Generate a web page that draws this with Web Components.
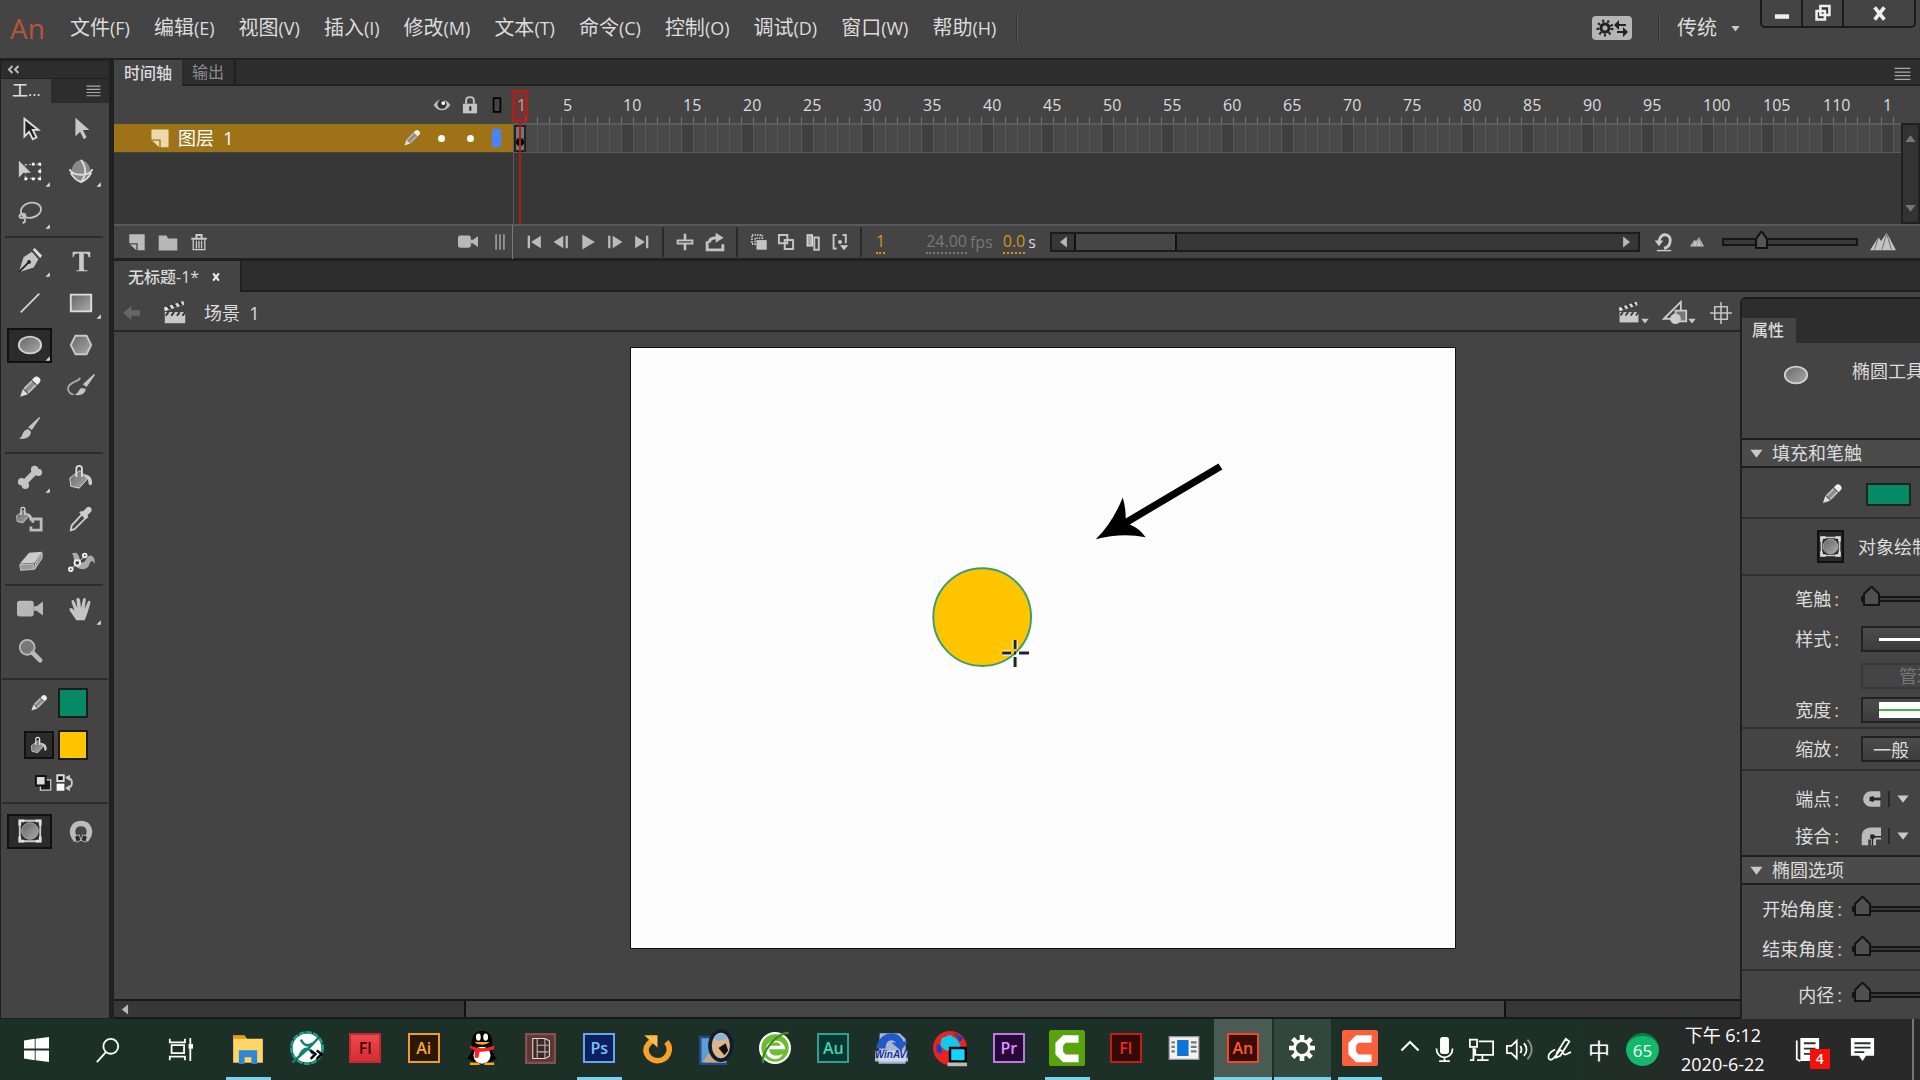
<!DOCTYPE html>
<html lang="zh-CN">
<head>
<meta charset="utf-8">
<title>An</title>
<style>
  :root {
    --bg: #444444;
    --bg-dark: #2d2d2d;
    --bg-body: #373737;
    --line: #202020;
    --text: #dcdcdc;
    --icon: #c4c4c4;
    --orange: #d99316;
    --green: #068a66;
    --yellow: #ffc500;
  }
  body {
    margin: 0;
    height: 100vh;
    display: flex;
    flex-direction: column;
    overflow: hidden;
    background: var(--line);
    color: var(--text);
    font: 18px/24px "Open Sans", "Noto Sans CJK SC", sans-serif;
  }
  main {
    flex: 1;
    min-height: 0;
    display: flex;
    gap: 4px;
  }
  .work {
    flex: 1;
    min-width: 0;
    display: flex;
    flex-direction: column;
    gap: 3px;
  }
  document-view { flex: 1; }
</style>
</head>
<body>
<menu-bar></menu-bar>
<main>
  <tools-panel></tools-panel>
  <div class="work">
    <timeline-panel></timeline-panel>
    <document-view><properties-panel></properties-panel></document-view>
  </div>
</main>
<task-bar></task-bar>

<script>
const BASE = `
  :host, * { box-sizing: border-box; }
  button, select, input {
    font: inherit;
    color: inherit;
    background: none;
    border: 0;
    padding: 0;
    margin: 0;
    border-radius: 0;
    appearance: none;
  }
  button { display: flex; align-items: center; justify-content: center; }
`;

const PENCIL = '<g transform="rotate(45 14 14)"><path d="M10 4a4 4 0 0 1 8 0v3h-8z" fill="#eee"/><path d="M10 8h8v12h-8z" fill="#8c8c8c"/><path d="M10 8h2v12h-2zM16 8h2v12h-2z" fill="#bbb"/><path d="M10 21h8l-4 8z" fill="#ddd"/></g>';
const BUCKET = '<path d="M2 15 13 7l8 9-9 10-9-2z" fill="url(#g)" stroke="#ddd"/><path d="M9 14V5a3 3 0 0 1 6 0v9" fill="none" stroke="#ddd" stroke-width="2"/><path d="M17 11c6 0 9 4 9 9 0 4-4 4-4 0 0-3-1-5-4-6z" fill="#ccc"/>';
const CLAP = '<path d="M3 13h22v12H3z" fill="#c9c9c9"/><path d="m2 8 21-7 1 4L3 12z" fill="#ddd"/><path d="m6 6 3 4M12 4l3 4M18 2l3 4" stroke="#333" stroke-width="3"/><path d="m7 13-3 4M13 13l-3 4M19 13l-3 4M25 13l-3 4" stroke="#333" stroke-width="2"/>';
const OBJ = '<path d="M3 3h22v22H3z" fill="#2a2a2a" stroke="#ccc" stroke-width="2"/><circle cx="14" cy="14" r="9" fill="url(#g)" stroke="#aaa"/><path d="M3 8V3h5M20 3h5v5M25 20v5h-5M8 25H3v-5" fill="none" stroke="#ddd" stroke-width="3"/>';

// every icon is drawn on a 28 x 28 grid
const ICONS = {
  select: '<path d="M8 3v19l5-5 4 8 4-2-4-8h6z" fill="#222" stroke="#ddd" stroke-width="2"/>',
  subselect: '<path d="M8 2v20l5-5 4 8 3-2-4-8h7z" fill="#c8c8c8"/>',
  transform: '<path d="M9 7h16v15H9z" fill="none" stroke="#ccc" stroke-dasharray="2 2"/><path d="M16 5h3v3h-3zM23 5h3v3h-3zM23 13h3v3h-3zM23 21h3v3h-3zM16 21h3v3h-3zM8 21h3v3H8z" fill="#fff"/><path d="M2 3v18l5-5h8z" fill="#ccc"/>',
  rotate3d: '<path d="M14 2C7 4 4 9 4 14c1 6 6 10 10 12 4-2 9-6 10-12 0-5-3-10-10-12z" fill="#888"/><path d="M2 12c1 8 23 8 24 0M14 2c6 8 6 16 0 24M3 16c2 4 6 8 11 10 5-2 9-6 11-10" fill="none" stroke="#ddd" stroke-width="2"/>',
  lasso: '<ellipse cx="15" cy="11" rx="11" ry="8" transform="rotate(-12 15 11)" fill="none" stroke="#c4c4c4" stroke-width="2"/><path d="M6 15c-5 1-4 5 0 4s4-5 0-4zm1 4c3 2 2 5-1 6" fill="none" stroke="#c4c4c4" stroke-width="2"/>',
  pen: '<path d="m2 26 5-16 9-6 7 8-5 9z" fill="#c4c4c4"/><path d="m2 26 11-11" stroke="#222" stroke-width="2"/><circle cx="13" cy="15" r="2" fill="#222"/><path d="m17 2 2-2 8 8-2 3z" fill="#ddd"/>',
  type: '<path d="M5 4h19v6h-2c0-3-1-4-5-4v16c0 2 1 2 4 2v1H9v-1c3 0 3 0 3-2V6c-5 0-5 1-6 4H5z" fill="#c9c9c9"/>',
  line: '<path d="M4 24 24 4" stroke="#d0d0d0" stroke-width="2"/>',
  rect: '<path d="M3 5h22v18H3z" fill="url(#g)" stroke="#ddd" stroke-width="2"/>',
  ellipse: '<ellipse cx="14" cy="14" rx="12" ry="9" fill="url(#g)" stroke="#d0d0d0" stroke-width="2"/>',
  hex: '<path d="M8 4h12l5 10-5 10H8L3 14z" fill="url(#g)" stroke="#c8c8c8" stroke-width="2"/>',
  pencil: PENCIL,
  brush: '<path d="m25 2-9 13-4-3L24 1z" fill="#c4c4c4"/><path d="M15 17c0 6-7 9-13 7 4-1 3-4 6-8l4-2z" fill="#c4c4c4"/>',
  paint: '<path d="m29 1-9 13-4-3L28 0z" fill="#c4c4c4"/><path d="M19 16c0 6-7 8-12 6 4-1 4-4 7-7z" fill="#c4c4c4"/><path d="M13 4C12 9 0 8 0 16c0 4 4 6 6 6" fill="none" stroke="#aaa" stroke-width="2"/>',
  bone: '<path d="m6 22 16-16" stroke="#c4c4c4" stroke-width="6"/><g fill="#c4c4c4"><circle cx="19" cy="6" r="4"/><circle cx="23" cy="9" r="4"/><circle cx="5" cy="19" r="4"/><circle cx="9" cy="23" r="4"/></g>',
  bucket: BUCKET,
  inkbottle: '<g transform="translate(-2 0) scale(.7)">' + BUCKET + '</g><path d="M17 18v-4h9v12H15v-4" fill="none" stroke="#bbb" stroke-width="3"/>',
  dropper: '<path d="m15 9 4 4L7 25l-4 1 1-5z" fill="none" stroke="#ccc" stroke-width="2"/><path d="m12 7 3-2 1 1 4-4c3-3 7 1 5 4l-4 4 1 2-3 2z" fill="#ccc"/>',
  eraser: '<path d="m13 5 14-1-8 12-16 1z" fill="#ccc"/><path d="m3 18 15-1v6L4 24zM20 16l7-11v6l-8 12z" fill="#999" stroke="#ccc"/>',
  width: '<path d="M4 6c9-4 7 6 11 10 5-1 5-8 9-8s5 5 5 9c-4-6-5-2-7 3-4 5-14 3-15-3-1-4 0-8-3-11z" fill="#aaa"/><path d="m3 23 16-15" stroke="#eee"/><g fill="#444" stroke="#eee" stroke-width="2"><circle cx="3" cy="23" r="2"/><circle cx="10" cy="16" r="3"/><circle cx="18" cy="8" r="2"/></g>',
  camera: '<rect x="0" y="5" width="18" height="17" rx="3" fill="#b8b8b8"/><path d="M18 11h3l7-5v15l-7-5h-3z" fill="#b8b8b8"/>',
  hand: '<path d="M9 26 2 16c-2-3 2-4 3-2l2 2L4 7c-1-3 2-4 3-1l3 7-1-9c0-3 3-3 4 0l1 9 2-9c1-3 4-2 3 1l-1 9 3-7c1-3 4-2 3 1l-3 10-3 8z" fill="#c4c4c4"/>',
  zoom: '<circle cx="11" cy="10" r="8" fill="#777" stroke="#bbb" stroke-width="2"/><path d="m17 16 8 8" stroke="#bbb" stroke-width="5" stroke-linecap="round"/>',
  swapColors: '<path d="M10 9h16v16H10z" fill="#1b1b1b" stroke="#ccc" stroke-width="2"/><path d="M3 3h15v15H3z" fill="#ddd" stroke="#111" stroke-width="3"/>',
  defaults: '<path d="M2 2h10v9H2z" fill="#111" stroke="#ddd" stroke-width="3"/><path d="M1 15h12v11H1z" fill="#fff"/><path d="M18 6c9 1 9 14 0 16" fill="none" stroke="#ccc" stroke-width="3"/><path d="m22 1-8 4 7 6zM21 17l-7 5 8 5z" fill="#ccc"/>',
  object: OBJ,
  magnet: '<path d="M9 24C1 14 6 6 14 6s13 8 5 18" fill="none" stroke="#bbb" stroke-width="6"/><path d="m7 20 5-2 2 6-5 2zM16 18l5 2-2 6-5-2z" fill="#2a2a2a" stroke="#bbb"/>',
  eye: '<path d="M1 14C7 3 21 3 27 14 21 25 7 25 1 14z" fill="#bbb"/><circle cx="14" cy="13" r="7" fill="#333"/><circle cx="16" cy="11" r="3" fill="#fff"/>',
  lock: '<path d="M3 12h22v15H3z" fill="#c4c4c4"/><path d="M8 12V7c0-7 12-7 12 0v5" fill="none" stroke="#c4c4c4" stroke-width="3"/><path d="M13 16h3v7h-3z" fill="#222"/>',
  outline: '<path d="M8 2h12v24H8z" fill="none" stroke="#000" stroke-width="3"/>',
  layer: '<path d="M2 2h24v25H15v-11H2z" fill="currentColor"/><path d="M3 18h10v9z" fill="currentColor"/>',
  folder: '<path d="M1 5h11l2 4h13v17H1z" fill="#b8b8b8"/>',
  trash: '<path d="M2 9h24M10 8V3h8v5" fill="none" stroke="#ccc" stroke-width="3"/><path d="M5 11v15h18V11M10 12v12M14 12v12M18 12v12" fill="none" stroke="#ccc" stroke-width="2"/>',
  grip: '<path d="M3-8v44M14-8v44M25-8v44" stroke="#aaa" stroke-width="4"/>',
  first: '<path d="M3 3h4v22H3zM26 3v22L9 14z" fill="#bbb"/>',
  prev: '<path d="M22 3h4v22h-4zM18 3v22L1 14z" fill="#bbb"/>',
  play: '<path d="m4 1 22 13L4 27z" fill="#bbb"/>',
  next: '<path d="M2 3h4v22H2zM10 3v22l17-11z" fill="#bbb"/>',
  last: '<path d="M21 3h4v22h-4zM2 3v22l17-11z" fill="#bbb"/>',
  center: '<path d="M1 10h26v8H1zM12 1h4v26h-4z" fill="#c4c4c4"/><path d="M4 14h20" stroke="#444" stroke-width="2"/>',
  loop: '<path d="M3 13v12h22v-8M6 15c0-5 3-7 10-7" fill="none" stroke="#c4c4c4" stroke-width="4"/><path d="m15 1 11 7-11 7z" fill="#c4c4c4"/>',
  onion: '<path d="M10 11h16v15H10z" fill="#c4c4c4"/><path d="M3 3h16v5H8v9H3z" fill="none" stroke="#ccc" stroke-width="3" stroke-dasharray="2 2"/>',
  onionOutline: '<path d="M3 3h13v13H3zM12 11h13v14H12z" fill="none" stroke="#c4c4c4" stroke-width="3"/>',
  editFrames: '<path d="M5 3h8v17H5z" fill="#aaa" stroke="#ddd" stroke-width="2"/><path d="M16 7h7v19h-7z" fill="none" stroke="#c4c4c4" stroke-width="3"/>',
  markers: '<path d="M9 3H4v21h5M18 3h5v13" fill="none" stroke="#c4c4c4" stroke-width="3"/><circle cx="14" cy="14" r="3" fill="#ccc"/><path d="M14 19h13l-7 8z" fill="#ccc"/>',
  reset: '<path d="M4 26h20" stroke="#ccc" stroke-width="2"/><path d="M7 13C9-2 27 3 22 16c-1 4-4 6-8 7" fill="none" stroke="#ccc" stroke-width="4"/><path d="M1 12h12l-6 8z" fill="#ccc"/>',
  hills: '<path d="M0 23 9 9l3 4 6-9 10 19z" fill="#c4c4c4"/><path d="m9 9-4 13M18 5l-5 17M18 5l5 17" stroke="#666"/>',
  back: '<path d="M2 14 13 4v6h12v8H13v6z" fill="#666"/>',
  clap: CLAP,
  shapes: '<path d="M1 21 20 2v19z" fill="none" stroke="#ccc" stroke-width="2"/><path d="M14 12h12v12H14z" fill="#777" stroke="#ccc" stroke-width="2"/><circle cx="14" cy="21" r="6" fill="#ccc"/>',
  target: '<path d="M14 0v28M0 14h28M6 6h16v16H6z" fill="none" stroke="#c4c4c4" stroke-width="2"/>',
  down: '<path d="M1 6h26L14 23z" fill="#c9c9c9"/>',
  up: '<path d="M1 23h26L14 6z" fill="#777"/>',
  left: '<path d="M23 1v26L7 14z" fill="#b8b8b8"/>',
  right: '<path d="M5 1v26l16-13z" fill="#b8b8b8"/>',
  corner: '<path d="M27 2v25H3z" fill="#ddd"/>',
  menu: '<path d="M1 4h26M1 10h26M1 16h26M1 22h26" stroke="#aaa" stroke-width="2"/>',
  rewind: '<path d="M11 6 4 13l7 7M23 6l-7 7 7 7" fill="none" stroke="#bbb" stroke-width="4"/>',
  cap: '<path d="M27 3H14a11 11 0 0 0 0 22h13v-7H15v-8h12z" fill="#bbb"/><path d="M12 11h6v6h-6zM18 13h10v2H18z" fill="#222"/><path d="M18 9h9v3h-9zM18 16h9v3h-9z" fill="#bbb"/>',
  join: '<path d="M1 27V15C1 7 6 2 14 2h14v17h-7v8h-7v-8h-4v8z" fill="#bbb"/><path d="M13 12h6v6h-6zM19 14h9v2h-9zM15 18h2v9h-2z" fill="#222"/>',
  min: '<path d="M3 16h22v7H3z" fill="#eee"/>',
  restore: '<path d="M10 3h14v14H10zM4 11h13v13H4z" fill="#333" stroke="#eee" stroke-width="4"/>',
  close: '<path d="m6 4 16 20M22 4 6 24" stroke="#eee" stroke-width="6"/>',
  // taskbar
  win: '<path d="m0 4 12-2v11H0zM13 2l15-2v13H13zM0 15h12v11L0 24zM13 15h15v13l-15-2z" fill="#fff"/>',
  search: '<circle cx="17" cy="10" r="8" fill="none" stroke="#fff" stroke-width="2"/><path d="M12 16 2 27" stroke="#fff" stroke-width="2"/>',
  tasks: '<path d="M2 2v4h17V2M2 26v-4h17v4M4 9h14v9H4zM25 1v26" fill="none" stroke="#fff" stroke-width="2"/><path d="M23 8h5v5h-5z" fill="#fff"/>',
  explorer: '<path d="M1 3h10l2 3h14v21H1z" fill="#ffd567"/><path d="M1 3h10l2 3H1z" fill="#e59b16"/><path d="M6 16h16v12h-5v-6h-6v6H6z" fill="#2e86d4"/>',
  xmind: '<circle cx="14" cy="14" r="12" fill="#fff"/><circle cx="14" cy="14" r="13" fill="none" stroke="#16a189" stroke-width="2" stroke-dasharray="5 1"/><path d="M9 7c2 5 6 6 10 3M2 26C10 18 14 17 24 5M8 20c3-6 7-8 11-1" fill="none" stroke="#13806f" stroke-width="2"/><path d="m17 16 4 3-4 4M22 16l4 3-4 4" fill="none" stroke="#000" stroke-width="2"/>',
  qq: '<path d="M6 16C4 4 8 0 14 0s10 4 8 16l4 7-3 1-3 3H8l-3-3-3-1z" fill="#000"/><ellipse cx="14" cy="20" rx="7" ry="7" fill="#fff"/><path d="M4 12c7 3 13 3 20 0v3c-6 2-9 2-12 2l-1 5H8v-6l-4-2z" fill="#f42222"/><ellipse cx="11" cy="5" rx="2" ry="3" fill="#fff"/><ellipse cx="17" cy="5" rx="2" ry="3" fill="#fff"/><path d="M8 9h12c-2 3-10 3-12 0zM4 26h8v2H4zM16 26h8v2h-8z" fill="#fba61b"/>',
  film: '<path d="M1 1h26v26H1z" fill="#603634" stroke="#82524f" stroke-width="2"/><path d="M7 5h11l4 2v14l-4 2H7z" fill="#3d2625" stroke="#ddd"/><path d="M11 5v18M18 5v18M11 11h10M11 17h10" stroke="#bbb"/>',
  refresh: '<path d="M9 7c-11 8-3 18 5 18 9 0 14-10 8-17" fill="none" stroke="#f9a02b" stroke-width="5"/><path d="M2 2h12v11z" fill="#ffbc4b"/>',
  magnify: '<path d="M1 5h21v22H1z" fill="#5f9ed3" stroke="#244a8b" stroke-width="2"/><path d="m3 26 8-12 12 12z" fill="#c4a68b"/><ellipse cx="18" cy="12" rx="9" ry="12" fill="#dcb58b" stroke="#111b32" stroke-width="3"/><path d="M12 6c4-5 9-4 12 0l-8 2z" fill="#7db7e6"/><path d="m16 14 6-4 2 6-3 4z" fill="#111"/>',
  browser: '<circle cx="14" cy="14" r="13" fill="#6cbd33" stroke="#fff" stroke-width="2"/><path d="M23 15H9c0 6 7 7 12 4-4 9-17 4-15-5s16-9 17 1zM10 12h9c-1-4-7-4-9 0z" fill="#fff"/><path d="M4 27C0 19 17-1 26 1" fill="none" stroke="#39901d" stroke-width="2"/>',
  winavi: '<path d="M4 1h17l5 5v21H3z" fill="#a9b8cf"/><path d="M1 14C3-1 20-3 24 8h4l-6 8-8-7h4C14 5 9 7 9 14z" fill="#2458c9"/><path d="M0 16h28v9H0z" fill="#d6e3f3" opacity=".8"/>',
  globe: '<circle cx="14" cy="14" r="14" fill="#e92222"/><path d="m7 6 7-3 6 4 3 6-5 5-7-2-5-3z" fill="#11c9ea"/><path d="M3 11c4 0 5 3 4 8l-4-2zM17 1l8 5-3 3z" fill="#1c3fc2"/><path d="M14 14h13v11H14z" fill="#14d5ff" stroke="#000" stroke-width="2"/><path d="M12 26h16v3H12z" fill="#bbb"/>',
  camtasia: '<rect width="28" height="28" rx="2" fill="#58a30c"/><path d="M23 4H11L5 10v9l6 6h12v-6H13l-2-2v-5l2-2h10z" fill="#fff"/>',
  recorder: '<rect width="28" height="28" rx="2" fill="#fb5f3c"/><path d="M23 4H11L5 10v9l6 6h12v-6H13l-2-2v-5l2-2h10z" fill="#fff"/>',
  news: '<path d="M1 4h26v20H1z" fill="#f2f2f2" stroke="#999"/><path d="M8 7h10v14H8z" fill="#0c75d8"/><path d="M3 9h3M3 13h3M3 17h3M20 9h5M20 13h5M20 17h5" stroke="#777" stroke-width="2"/>',
  gear: '<circle cx="14" cy="14" r="8" fill="none" stroke="#fff" stroke-width="3"/><path d="M14 0v6M14 22v6M0 14h6M22 14h6M4 4l4 4M20 20l4 4M24 4l-4 4M4 24l4-4" stroke="#fff" stroke-width="5"/>',
  chevron: '<path d="m2 19 12-12 12 12" fill="none" stroke="#fff" stroke-width="3"/>',
  mic: '<rect x="9" y="0" width="10" height="19" rx="3" fill="#fff"/><path d="M5 13c0 13 18 13 18 0M14 22v5M8 27h12" fill="none" stroke="#fff" stroke-width="2"/>',
  network: '<path d="M11 5h16v15H7v-7M15 20v6M9 26h13M5 12v14H1" fill="none" stroke="#fff" stroke-width="2"/><path d="M1 3h8v8H1z" fill="none" stroke="#fff" stroke-width="2"/>',
  sound: '<path d="M1 10h5l6-6v20l-6-6H1zM16 10c2 3 2 5 0 8M20 7c4 4 4 10 0 14" fill="none" stroke="#fff" stroke-width="2"/><path d="M24 3c6 7 6 15 0 22" fill="none" stroke="#8a9690" stroke-width="2"/>',
  ink: '<path d="M11 18 21 2l4 3-10 16-5 2zM9 14c-12 6-7 15-2 10 6-5 7-14 11-6 2 4 5 0 9-1" fill="none" stroke="#fff" stroke-width="2"/>',
  paper: '<path d="M6 1h21v14h-7v12H6z" fill="#fff"/><path d="M2 4v21l4 2" fill="none" stroke="#fff" stroke-width="2"/><path d="M10 7h13M10 13h13M10 19h8" stroke="#29312e" stroke-width="2"/>',
  notes: '<path d="M1 1h26v20h-9l-4 6-4-6H1z" fill="#fff"/><path d="M5 7h18M5 12h18M5 17h11" stroke="#29312e" stroke-width="2"/>',
};

class AppIcon extends HTMLElement {
  connectedCallback() {
    const size = this.getAttribute("size") || 28;
    this.attachShadow({ mode: "open" }).innerHTML = `
      <style>
        :host { display: inline-flex; flex: none; }
        svg { display: block; overflow: visible; }
      </style>
      <svg width="${size}" height="${size}" viewBox="0 0 28 28" aria-hidden="true">
        <defs><linearGradient id="g" x1="0" y1="0" x2="1" y2="1"><stop stop-color="#666"/><stop offset="1" stop-color="#aaa"/></linearGradient></defs>
        ${ICONS[this.getAttribute("name")]}
      </svg>`;
  }
}

const icon = (name, size) => `<app-icon name="${name}" size="${size}"></app-icon>`;

class MenuBar extends HTMLElement {
  connectedCallback() {
    const items = ["文件(F)", "编辑(E)", "视图(V)", "插入(I)", "修改(M)", "文本(T)", "命令(C)", "控制(O)", "调试(D)", "窗口(W)", "帮助(H)"];
    this.attachShadow({ mode: "open" }).innerHTML = `
      <style>
        ${BASE}
        :host {
          display: flex;
          align-items: center;
          height: 60px;
          padding: 0 4px 2px 10px;
          background: var(--bg);
          border-bottom: 2px solid var(--line);
        }
        .logo { color: #b55638; font-size: 28px; width: 60px; }
        nav { display: flex; gap: 24px; }
        nav button { font-size: 20px; }
        nav span { font-size: 18px; }
        .sep { width: 2px; height: 30px; margin-left: 20px; background: #333; border-right: 1px solid #555; }
        .grow { flex: 1; }
        .swap { width: 40px; height: 24px; border-radius: 4px; background: #b5b5b5; }
        .swap + .sep { margin: 0 17px 0 26px; }
        select { font-size: 20px; width: 54px; }
        .window {
          display: flex;
          align-self: flex-start;
          height: 28px;
          margin-left: 20px;
          border: 2px solid #1c1c1c;
          border-top: 0;
          border-radius: 0 0 5px 5px;
        }
        .window button { width: 41px; border-right: 2px solid #1c1c1c; }
        .window button:last-child { width: 70px; border: 0; }
      </style>
      <span class="logo">An</span>
      <nav>${items.map((t) => `<button>${t.slice(0, 2)}<span>${t.slice(2)}</span></button>`).join("")}</nav>
      <i class="sep"></i>
      <i class="grow"></i>
      <button class="swap" aria-label="同步设置">
        <svg width="34" height="20" viewBox="0 0 34 20">
          <circle cx="10" cy="10" r="4" fill="none" stroke="#222" stroke-width="3"/>
          <circle cx="10" cy="10" r="7" fill="none" stroke="#222" stroke-width="3" stroke-dasharray="2 3"/>
          <path d="M31 7h-8M22 14h8" stroke="#222" stroke-width="2"/>
          <path d="m24 2-5 5 5 5zM28 9l5 5-5 5z" fill="#222"/>
        </svg>
      </button>
      <i class="sep"></i>
      <select aria-label="工作区"><option>传统</option></select>
      ${icon("down", 9)}
      <div class="window">
        <button aria-label="最小化">${icon("min", 18)}</button>
        <button aria-label="还原">${icon("restore", 18)}</button>
        <button aria-label="关闭">${icon("close", 17)}</button>
      </div>`;
  }
}

class ToolsPanel extends HTMLElement {
  connectedCallback() {
    // "+" marks a tool with a flyout, "*" the active one
    const groups = [
      ["select", "subselect", "transform+", "rotate3d+", "lasso+"],
      ["pen+", "type", "line", "rect+", "ellipse+*", "hex", "pencil", "paint", "brush"],
      ["bone+", "bucket", "inkbottle", "dropper", "eraser", "width"],
      ["camera", "hand+", "zoom"],
    ];
    const tool = (t) => {
      const name = t.replace(/[+*]/g, "");
      return `<button class="tool${t.includes("*") ? " on" : ""}" aria-label="${name}">
        ${icon(name, 26)}${t.includes("+") ? `<span class="fly">${icon("corner", 5)}</span>` : ""}</button>`;
    };
    this.attachShadow({ mode: "open" }).innerHTML = `
      <style>
        ${BASE}
        :host {
          display: flex;
          flex-direction: column;
          flex: none;
          width: 110px;
          background: var(--bg);
          border: 1px solid var(--line);
        }
        .top { height: 18px; padding: 2px 6px; background: var(--bg-dark); border-bottom: 1px solid var(--line); display: flex; }
        .tabs { display: flex; height: 24px; margin-bottom: 5px; background: var(--bg-dark); font-size: 16px; }
        .tabs b { width: 50px; padding-left: 11px; background: var(--bg); line-height: 22px; font-weight: 500; }
        .tabs app-icon { margin: 5px 8px 0 auto; }
        .group {
          display: grid;
          grid-template-columns: 51px 51px;
          grid-auto-rows: 42px;
          place-items: center;
          padding: 0 3px;
        }
        .group:last-child { padding-top: 4px; }
        hr { width: 98px; height: 2px; margin: 2px 4px; border: 0; background: #2c2c2c; }
        .tool { position: relative; width: 45px; height: 35px; border: 2px solid transparent; }
        .on { background: #2b2b2b; border-color: #111; }
        .fly { position: absolute; right: 0; bottom: 0; display: flex; }
        .colors { display: grid; grid-template-columns: 30px 30px; gap: 0 4px; grid-auto-rows: 42px; place-items: center; padding-left: 23px; }
        .swatch { width: 30px; height: 30px; border: 2px solid #1c1c1c; }
        .small { display: flex; gap: 4px; align-items: center; height: 34px; padding-left: 33px; }
        .wide { width: 106px; margin: 2px 1px; }
        .wide.first { margin-top: 6px; }
        .bucket { width: 30px; height: 28px; border: 2px solid #111; background: #2b2b2b; }
      </style>
      <div class="top">${icon("rewind", 14)}</div>
      <div class="tabs"><b>工...</b>${icon("menu", 15)}</div>
      ${groups.map((g) => `<div class="group">${g.map(tool).join("")}</div>`).join("<hr>")}
      <hr class="wide first">
      <div class="colors">
        ${icon("pencil", 20)}
        <button class="swatch" style="background: var(--green)" aria-label="笔触颜色"></button>
        <button class="bucket" aria-label="填充">${icon("bucket", 18)}</button>
        <button class="swatch" style="background: var(--yellow)" aria-label="填充颜色"></button>
      </div>
      <div class="small">${icon("swapColors", 18)}${icon("defaults", 18)}</div>
      <hr class="wide">
      <div class="group">${tool("object*")}${tool("magnet")}</div>`;
  }
}

class TimelinePanel extends HTMLElement {
  connectedCallback() {
    const marks = [];
    for (let n = 5; n <= 110; n += 5) marks.push(n);
    const btn = (name, size = 18) => `<button class="${name}" aria-label="${name}">${icon(name, size)}</button>`;
    this.attachShadow({ mode: "open" }).innerHTML = `
      <style>
        ${BASE}
        :host { display: block; background: var(--bg); }
        .tabs { display: flex; height: 26px; font-size: 16px; background: var(--bg-dark); border-bottom: 2px solid var(--line); }
        .tabs button { align-self: stretch; height: 26px; padding: 0 10px; }
        .tabs button:first-child { background: var(--bg); font-weight: 500; }
        .tabs button + button { height: 24px; color: #8c8c8c; border-right: 2px solid var(--line); }
        .tabs app-icon { margin: 6px 9px 0 auto; }
        .grid { display: grid; grid-template-columns: 399px 1fr 19px; grid-template-rows: 37px 30px 71px; position: relative; overflow: hidden; }
        .cols { display: flex; justify-content: flex-end; align-items: center; gap: 10px; padding-right: 8px; }
        .ruler {
          display: flex;
          grid-column: span 2;
          min-width: 0;
          margin-right: 15px;
          overflow: hidden;
          padding: 7px 0 0 1px;
          font-size: 16px;
          line-height: 24px;
          background: repeating-linear-gradient(90deg, #777 0 1px, transparent 1px 12px) 12px 100% / 100% 6px no-repeat;
        }
        .ruler span { flex: none; width: 60px; padding-left: 1px; }
        .ruler span:first-child { width: 48px; padding-left: 3px; }
        .row { display: flex; align-items: center; background: #9e7317; padding-left: 36px; height: 28px; margin-top: 1px; color: #fff; }
        .row .name { flex: 1; padding-left: 8px; }
        .row i { width: 7px; height: 7px; border-radius: 4px; background: #fff; margin-left: 16px; }
        .row i + i { margin: 0 18px 0 22px; }
        .row u { width: 9px; height: 18px; background: #4585ff; margin-right: 12px; }
        .frames {
          border: solid #5b5b5b;
          border-width: 2px 0 1px 1px;
          background:
            repeating-linear-gradient(90deg, transparent 0 11px, #575757 11px 12px),
            repeating-linear-gradient(90deg, #494949 0 48px, #3f3f3f 48px 60px);
        }
        .frames svg { display: block; }
        .bar { grid-area: 2 / 3 / 4 / 4; display: flex; flex-direction: column; justify-content: space-between; align-items: center; padding: 8px 0; background: #333; border: 2px solid var(--line); }
        .bar app-icon:last-child { rotate: 180deg; }
        .empty { background: var(--bg-body); }
        .empty.right { border-left: 1px solid #5b5b5b; }
        .head { position: absolute; left: 398px; top: 4px; width: 16px; height: 32px; border: 2px solid #b01f18; background: rgba(190, 30, 25, .35); }
        .stem { position: absolute; left: 405px; top: 36px; bottom: 0; width: 2px; background: #ad1d17; }
        footer { display: flex; align-items: center; height: 34px; border-top: 2px solid #5a5a5a; }
        footer button { height: 24px; }
        .left { display: flex; align-items: center; width: 399px; height: 34px; padding-left: 7px; border-right: 1px solid #777; color: #bbb; }
        .left button { width: 31px; }
        .left .trash { margin-right: auto; }
        .left .camera { margin-right: 4px; }
        .left .grip { width: 25px; }
        .set { display: flex; align-items: center; height: 30px; padding: 0 7px; border-right: 2px solid #2a2a2a; }
        .set button { width: 27px; }
        .set.two { padding: 0 6px; }
        .set.two button { width: 30px; }
        .num { font-size: 16px; height: 24px; margin-left: 14px; color: var(--orange); border-bottom: 2px dotted; }
        .num.fps { margin-left: 41px; }
        .num.time { margin-left: 10px; }
        .dim { color: #777; }
        .unit { font-size: 16px; margin-left: 3px; }
        .scroll { display: flex; align-items: stretch; flex: 1; height: 20px; margin: 0 14px; background: var(--bg-body); border: 2px solid #1b1b1b; }
        .scroll button { width: 22px; height: auto; }
        .thumb { width: 103px; background: #464646; border: solid #111; border-width: 0 2px; }
        .scroll button:last-child { margin-left: auto; }
        .reset { margin-right: 16px; }
        .big { display: flex; padding-right: 24px; }
        input[type=range] { width: 136px; height: 24px; margin: 0 12px 0 18px; }
        input::-webkit-slider-runnable-track { height: 8px; border: 2px solid #161616; background: #3a3a3a; }
        input::-webkit-slider-thumb {
          appearance: none;
          width: 13px;
          height: 18px;
          margin-top: -9px;
          background: url("data:image/svg+xml,%3Csvg xmlns='http://www.w3.org/2000/svg' viewBox='0 0 13 18'%3E%3Cpath d='M1 17V8l5-7h1l5 7v9z' fill='%23555' stroke='%23111' stroke-width='2'/%3E%3C/svg%3E");
        }
      </style>
      <div class="tabs"><button>时间轴</button><button>输出</button>${icon("menu", 17)}</div>
      <div class="grid">
        <div class="cols">${icon("eye", 18)}${icon("lock", 18)}${icon("outline", 16)}</div>
        <div class="ruler"><span>1</span>${marks.map((n) => `<span>${n}</span>`).join("")}<span>1</span></div>
        <div class="row">
          <app-icon name="layer" size="20" style="color: #ecd9ae"></app-icon>
          <span class="name">图层&nbsp; 1</span>${icon("pencil", 20)}<i></i><i></i><u></u>
        </div>
        <div class="frames"><svg width="13" height="27"><path d="M1 1h10v25H1z" fill="#777" stroke="#222" stroke-width="2"/><circle cx="6" cy="17" r="4"/></svg></div>
        <div class="bar">${icon("up", 11)}${icon("up", 11)}</div>
        <div class="empty"></div>
        <div class="empty right"></div>
        <div class="head"></div>
        <div class="stem"></div>
      </div>
      <footer>
        <div class="left">${btn("layer")}${btn("folder", 20)}${btn("trash")}${btn("camera", 20)}${btn("grip", 10)}</div>
        <div class="set">${["first", "prev", "play", "next", "last"].map((n) => btn(n, 16)).join("")}</div>
        <div class="set two">${btn("center")}${btn("loop", 20)}</div>
        <div class="set">${["onion", "onionOutline", "editFrames", "markers"].map((n) => btn(n, 18)).join("")}</div>
        <button class="num">1</button>
        <button class="num fps dim">24.00</button><span class="unit dim">fps</span>
        <button class="num time">0.0</button><span class="unit">s</span>
        <div class="scroll">
          <button aria-label="向左">${icon("left", 12)}</button><div class="thumb"></div><button aria-label="向右">${icon("right", 12)}</button>
        </div>
        ${btn("reset", 20)}${icon("hills", 14)}
        <input type="range" aria-label="帧大小" min="0" max="100" value="26">
        <span class="big">${icon("hills", 26)}</span>
      </footer>`;
  }
}

class DocumentView extends HTMLElement {
  connectedCallback() {
    this.attachShadow({ mode: "open" }).innerHTML = `
      <style>
        ${BASE}
        :host { display: flex; flex-direction: column; position: relative; min-height: 0; background: var(--bg); }
        .tabs { display: flex; height: 31px; background: var(--bg-dark); border-bottom: 2px solid var(--line); }
        .tab { display: flex; align-items: center; gap: 12px; width: 128px; height: 31px; padding-left: 14px; font-size: 16px; font-weight: 500; background: var(--bg); border-right: 2px solid var(--line); }
        .bar { display: flex; align-items: center; height: 40px; padding: 3px 188px 0 8px; border-bottom: 2px solid #262626; }
        .bar > span { flex: 1; padding-left: 16px; }
        .back { display: flex; margin-right: 20px; }
        .pair { display: flex; align-items: flex-end; margin-right: 14px; }
        .canvas { flex: 1; position: relative; overflow: hidden; }
        .stage { position: absolute; left: 516px; top: 15px; border: 1px solid #111; background: #fdfdfd; }
        .scroll { display: flex; height: 20px; margin-right: 180px; background: var(--bg-body); border: solid #181818; border-width: 2px 0; }
        .scroll button { width: 20px; }
        .thumb { flex: 1040; background: #454545; border: solid #111; border-width: 0 2px; }
      </style>
      <div class="tabs"><div class="tab">无标题-1*<button aria-label="关闭">${icon("close", 10)}</button></div></div>
      <div class="bar">
        <button class="back" aria-label="返回">${icon("back", 20)}</button>${icon("clap", 26)}<span>场景&nbsp; 1</span>
        <div class="pair">${icon("clap", 24)}${icon("down", 8)}</div>
        <div class="pair">${icon("shapes", 25)}${icon("down", 8)}</div>
        ${icon("target", 22)}
      </div>
      <div class="canvas">
        <svg class="stage" width="826" height="602" viewBox="0 0 826 602">
          <path d="M466 192Q483 175 493 150Q496 160 496 171L589 116L593 122L500 177Q510 181 516 190Q492 185 466 192Z"/>
          <circle cx="352" cy="270" r="49" fill="#ffc500" stroke="#3c9f70" stroke-width="2"/>
          <path d="M385 293v9M385 310v10M372 306h9M389 306h10" stroke="#fff" stroke-width="5"/>
          <path d="M385 293v9M385 310v10M372 306h9M389 306h10M384 306h2" stroke="#222" stroke-width="3"/>
        </svg>
      </div>
      <div class="scroll">
        <button aria-label="向左">${icon("left", 11)}</button>
        <i style="flex: 331"></i><div class="thumb"></div><i style="flex: 235"></i>
      </div>
      <slot></slot>`;
  }
}

class PropertiesPanel extends HTMLElement {
  connectedCallback() {
    const slider = (id, text) => `
      <div class="row"><label for="${id}">${text}<i>:</i></label><input type="range" id="${id}" value="0"></div>`;
    this.attachShadow({ mode: "open" }).innerHTML = `
      <style>
        ${BASE}
        :host {
          position: absolute;
          right: 0;
          top: 36px;
          bottom: 0;
          width: 180px;
          overflow: hidden;
          background: var(--bg);
          border-left: 2px solid #202020;
          border-top: 2px solid #1b1b1b;
          border-top-left-radius: 6px;
          white-space: nowrap;
        }
        .top { height: 19px; background: var(--bg-dark); }
        .tabs { display: flex; height: 25px; font-size: 16px; background: var(--bg-dark); }
        .tabs b { width: 54px; padding-left: 10px; background: var(--bg); font-weight: 500; }
        .info { display: flex; height: 95px; padding: 16px 0 0 41px; }
        .info span { padding-left: 43px; }
        .info app-icon { padding-top: 3px; }
        h2 { display: flex; align-items: center; gap: 9px; height: 30px; margin: 0; padding-left: 8px; font-size: 18px; font-weight: 400; background: #4b4b4b; border: solid #1e1e1e; border-width: 2px 0; }
        .part { border-bottom: 2px solid #303030; }
        .row { display: flex; align-items: center; height: 40px; }
        .row label { flex: none; width: 97px; margin-right: 22px; text-align: right; }
        .row label i { font-style: normal; margin-left: 3px; color: #e5c79c; }
        .box { flex: none; width: 120px; height: 26px; padding-left: 16px; border: 2px solid #222; background: linear-gradient(#4c4c4c, #3c3c3c); justify-content: flex-start; }
        .box[disabled] { color: #777; padding-left: 36px; background: none; border-color: #383838; }
        select.box { padding-left: 10px; }
        .plain { height: 51px; gap: 22px; padding: 3px 0 0 78px; }
        .obj { height: 57px; gap: 14px; padding-left: 75px; }
        .obj button { width: 33px; height: 33px; background: #2a2a2a; border: 2px solid #111; }
        .fill { width: 45px; height: 23px; background: var(--green); border: 2px solid #222; }
        .lines { padding-top: 3px; }
        .lines .tight { height: 34px; }
        .caps { padding: 9px 0 1px; }
        .caps .row { height: 37px; }
        .caps i.v { width: 2px; height: 16px; margin: 0 7px; background: #282828; }
        .angles .row label { width: 100px; margin-right: 10px; }
        .angles .row { height: 40px; }
        .angles { padding-top: 4px; }
        input[type=range] { flex: none; width: 150px; height: 24px; }
        input::-webkit-slider-runnable-track { height: 6px; border: 2px solid #161616; background: #3a3a3a; }
        input::-webkit-slider-thumb {
          appearance: none;
          width: 17px;
          height: 20px;
          margin-top: -12px;
          background: url("data:image/svg+xml,%3Csvg xmlns='http://www.w3.org/2000/svg' viewBox='0 0 17 20'%3E%3Cpath d='M1 19V8l7-7h1l7 7v11z' fill='%23505050' stroke='%23141414' stroke-width='2'/%3E%3C/svg%3E");
        }
      </style>
      <div class="top"></div>
      <div class="tabs"><b>属性</b></div>
      <div class="info">${icon("ellipse", 26)}<span>椭圆工具</span></div>
      <h2>${icon("down", 13)}填充和笔触</h2>
      <div class="part row plain">${icon("pencil", 24)}<button class="fill" aria-label="笔触颜色"></button></div>
      <div class="part row obj"><button id="obj" aria-label="对象绘制">${icon("object", 23)}</button><label for="obj">对象绘制</label></div>
      <div class="part lines">
        ${slider("stroke", "笔触")}
        <div class="row"><label for="style">样式<i>:</i></label><button id="style" class="box"><svg width="90" height="3"><path d="M0 0h90v3H0z" fill="#fff"/></svg></button></div>
        <div class="row tight"><label></label><button class="box" disabled>管理</button></div>
        <div class="row tight"><label for="width">宽度<i>:</i></label><button id="width" class="box"><svg width="100" height="16"><path d="M0 0h100v16H0z" fill="#fff"/><path d="M0 7h100v2H0z" fill="#45b34c"/></svg></button></div>
      </div>
      <div class="part"><div class="row"><label for="scale">缩放<i>:</i></label><select id="scale" class="box"><option>一般</option></select></div></div>
      <div class="caps">
        <div class="row"><label for="cap">端点<i>:</i></label><button id="cap">${icon("cap", 20)}<i class="v"></i>${icon("down", 12)}</button></div>
        <div class="row"><label for="join">接合<i>:</i></label><button id="join">${icon("join", 20)}<i class="v"></i>${icon("down", 12)}</button></div>
      </div>
      <h2>${icon("down", 13)}椭圆选项</h2>
      <div class="part angles">${slider("start", "开始角度")}${slider("end", "结束角度")}</div>
      <div class="angles">${slider("inner", "内径")}</div>`;
    this.shadowRoot.querySelector(".obj label").style.width = "auto";
  }
}

// lettered application tile
class AppTile extends HTMLElement {
  connectedCallback() {
    this.attachShadow({ mode: "open" }).innerHTML = `
      <style>
        :host {
          display: flex;
          align-items: center;
          justify-content: center;
          box-sizing: border-box;
          width: 32px;
          height: 30px;
          border: 2px solid var(--edge);
          background: var(--tile);
          color: var(--ink);
          font-size: 16px;
          font-weight: 600;
        }
      </style>
      <slot></slot>`;
  }
}

class TaskBar extends HTMLElement {
  connectedCallback() {
    const tile = (text, edge, bg, ink) =>
      `<app-tile style="--edge: ${edge}; --tile: ${bg}; --ink: ${ink}">${text}</app-tile>`;
    const apps = [
      [icon("explorer", 32), "open"],
      [icon("xmind", 34)],
      [tile("Fl", "#c02a30", "linear-gradient(#f0484c, #d92b33)", "#3b0507")],
      [tile("Ai", "#f29a22", "#2b1705", "#fba42b")],
      [icon("qq", 34)],
      [icon("film", 31)],
      [tile("Ps", "#6aa5e8", "#0c1f5f", "#7fc0ff"), "open"],
      [icon("refresh", 31)],
      [icon("magnify", 34)],
      [icon("browser", 32)],
      [tile("Au", "#33a08e", "#093630", "#43d2b8")],
      [icon("winavi", 33) + "<small>WinAVI</small>"],
      [icon("globe", 34)],
      [tile("Pr", "#b57be0", "#2a0736", "#dc93ff")],
      [icon("camtasia", 36), "open"],
      [tile("Fl", "#c21f14", "#350907", "#ec2c1b")],
      [icon("news", 32)],
      [tile("An", "#ee4a1f", "#3a0c04", "#ff5a2b"), "active"],
      [icon("gear", 26), "active second"],
      [icon("recorder", 36), "open"],
    ];
    this.attachShadow({ mode: "open" }).innerHTML = `
      <style>
        ${BASE}
        :host { display: flex; height: 61px; color: #fff; background: linear-gradient(90deg, #1d3027 0 82%, #292929 90%); }
        .sys { display: flex; padding-right: 3px; }
        .sys button { width: 72px; }
        .apps { display: grid; grid-template-columns: repeat(20, 1fr); width: 1170px; }
        .apps button { position: relative; padding-bottom: 3px; }
        .open::after, .active::after { content: ""; position: absolute; left: 7px; right: 7px; bottom: 0; height: 3px; background: #76d2ef; }
        .active { background: #4a5c53; }
        .second { background: #31463c; border-left: 2px solid #1d3027; }
        .active::after { left: 0; right: 0; }
        small { position: absolute; top: 29px; color: #1b2d9c; font: italic 700 10px/14px "Liberation Sans", sans-serif; }
        .tray { flex: 1; display: flex; align-items: center; gap: 30px; padding: 0 6px 0 11px; }
        .status { display: flex; gap: 12px; }
        .input { display: flex; align-items: center; gap: 16px; margin: 0 -8px 0 -14px; }
        .input span { font-size: 22px; }
        .input .score { display: flex; align-items: center; justify-content: center; width: 33px; height: 33px; border-radius: 17px; background: #13b96a; font-size: 17px; border-top: 3px solid #0a7d49; }
        time { text-align: center; line-height: 29px; }
        .mail { position: relative; }
        .mail b { position: absolute; left: 15px; top: 12px; width: 20px; height: 20px; background: #f41208; font-size: 14px; line-height: 20px; font-weight: 600; }
        .end { width: 2px; height: 61px; margin-left: auto; background: #777; }
      </style>
      <div class="sys">
        <button aria-label="开始">${icon("win", 25)}</button>
        <button aria-label="搜索">${icon("search", 26)}</button>
        <button aria-label="任务视图">${icon("tasks", 25)}</button>
      </div>
      <div class="apps">${apps.map(([html, cls = ""]) => `<button class="${cls}">${html}</button>`).join("")}</div>
      <div class="tray">
        <div class="status">${icon("chevron", 20)}${icon("mic", 25)}${icon("network", 25)}${icon("sound", 25)}</div>
        <div class="input">${icon("ink", 25)}<span>中</span><span class="score">65</span></div>
        <time>下午 6:12<br>2020-6-22</time>
        <button class="mail" aria-label="消息">${icon("paper", 25)}<b>4</b></button>
        ${icon("notes", 25)}
        <i class="end"></i>
      </div>`;
  }
}

customElements.define("app-icon", AppIcon);
customElements.define("app-tile", AppTile);
customElements.define("menu-bar", MenuBar);
customElements.define("tools-panel", ToolsPanel);
customElements.define("timeline-panel", TimelinePanel);
customElements.define("document-view", DocumentView);
customElements.define("properties-panel", PropertiesPanel);
customElements.define("task-bar", TaskBar);
</script>
</body>
</html>
